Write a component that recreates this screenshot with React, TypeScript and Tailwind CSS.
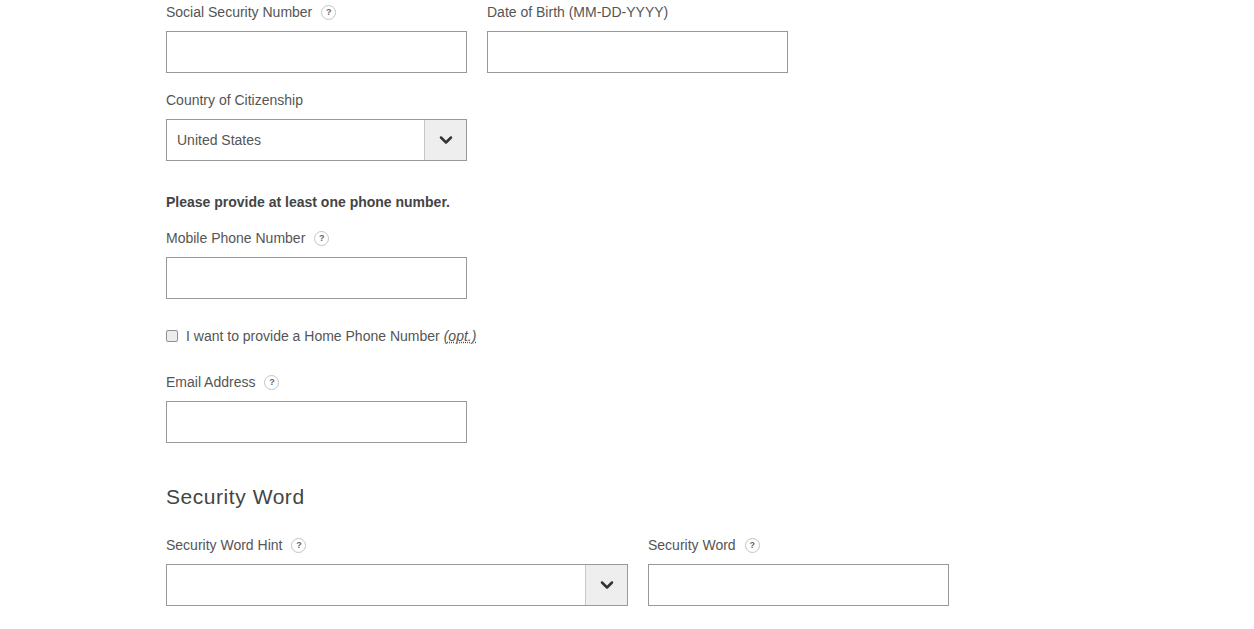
import { ChevronDown } from "lucide-react";

function Help() {
  return (
    <span className="ml-[9px] flex h-[15px] w-[15px] items-center justify-center rounded-full border border-[#c4c4c4] text-[9px] font-bold leading-none text-[#666]">
      ?
    </span>
  );
}

function Label({ text, help }: { text: string; help?: boolean }) {
  return (
    <div className="mb-[9px] flex h-5 items-center text-sm leading-5 text-[#555]">
      <span>{text}</span>
      {help && <Help />}
    </div>
  );
}

function Input({ width = "w-[301px]" }: { width?: string }) {
  return <div className={`h-[42px] border border-[#999999] bg-white ${width}`} />;
}

function Select({ value, width = "w-[301px]" }: { value?: string; width?: string }) {
  return (
    <div className={`flex h-[42px] items-center border border-[#999999] bg-white ${width}`}>
      <span className="flex-1 pl-[10px] text-sm text-[#555]">{value}</span>
      <span className="flex h-full w-[42px] items-center justify-center border-l border-[#c8c8c8] bg-[#eeeeee]">
        <ChevronDown size={20} strokeWidth={3} color="#333" />
      </span>
    </div>
  );
}

export default function App() {
  return (
    <div className="h-[629px] overflow-hidden bg-white pl-[166px] pt-[2px] font-['Liberation_Sans',Arial,sans-serif]">
      <div className="flex gap-5">
        <div>
          <Label text="Social Security Number" help />
          <Input />
        </div>
        <div>
          <Label text="Date of Birth (MM-DD-YYYY)" />
          <Input />
        </div>
      </div>

      <div className="mt-[17px]">
        <Label text="Country of Citizenship" />
        <Select value="United States" />
      </div>

      <p className="mt-[31px] text-sm font-bold leading-5 text-[#444]">
        Please provide at least one phone number.
      </p>

      <div className="mt-4">
        <Label text="Mobile Phone Number" help />
        <Input />
      </div>

      <label className="mt-[27px] flex h-5 items-center text-sm text-[#555]">
        <span className="h-[12px] w-[12px] rounded-[2px] border border-[#8f8f8f] bg-[#ececec]" />
        <span className="ml-2">I want to provide a Home Phone Number</span>
        <abbr className="ml-1 italic underline decoration-dotted">(opt.)</abbr>
      </label>

      <div className="mt-[26px]">
        <Label text="Email Address" help />
        <Input />
      </div>

      <h2 className="mt-[38px] h-8 text-[21px] leading-8 tracking-[0.55px] text-[#444]">Security Word</h2>

      <div className="mt-[22px] flex gap-5">
        <div>
          <Label text="Security Word Hint" help />
          <Select width="w-[462px]" />
        </div>
        <div>
          <Label text="Security Word" help />
          <Input />
        </div>
      </div>
    </div>
  );
}
